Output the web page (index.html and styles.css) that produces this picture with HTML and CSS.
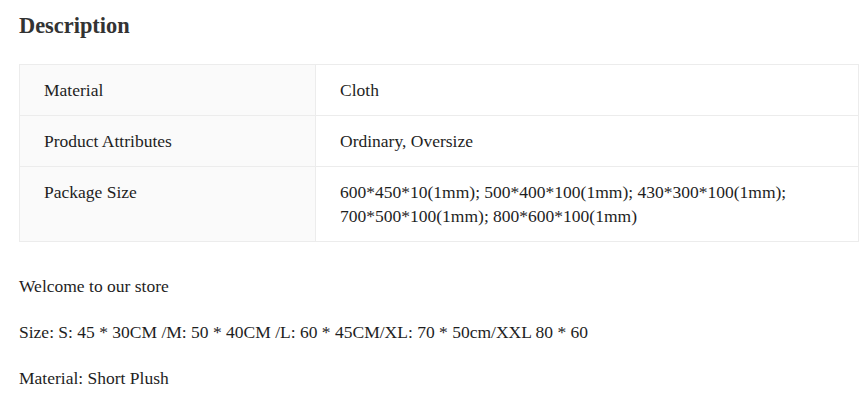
FILE: index.html
```html
<!DOCTYPE html>
<html>
<head>
<meta charset="utf-8">
<link rel="stylesheet" href="styles.css">
</head>
<body>
<div class="desc">
  <h2 class="desc-title">Description</h2>
  <table class="attrs">
    <tr><td class="attr-name">Material</td><td class="attr-value">Cloth</td></tr>
    <tr><td class="attr-name">Product Attributes</td><td class="attr-value">Ordinary, Oversize</td></tr>
    <tr><td class="attr-name">Package Size</td><td class="attr-value">600*450*10(1mm); 500*400*100(1mm); 430*300*100(1mm);<br>700*500*100(1mm); 800*600*100(1mm)</td></tr>
  </table>
  <div class="detail">
    <p>Welcome to our store</p>
    <p>Size: S: 45 * 30CM /M: 50 * 40CM /L: 60 * 45CM/XL: 70 * 50cm/XXL 80 * 60</p>
    <p>Material: Short Plush</p>
  </div>
</div>
</body>
</html>
```
FILE: styles.css
```css
html, body {
  margin: 0;
  padding: 0;
  background: #fff;
}
body {
  font-family: "Liberation Serif", "Times New Roman", serif;
  color: #1e1e1e;
  font-size: 17.5px;
}
.desc {
  padding: 0 8px 0 19px;
}
.desc-title {
  margin: 0;
  padding-top: 12px;
  font-size: 22.4px;
  line-height: 28px;
  font-weight: bold;
  color: #333;
}
.attrs {
  margin-top: 24px;
  width: 100%;
  border-collapse: collapse;
  border: 1px solid #ececec;
}
.attrs td {
  border: 1px solid #ececec;
  padding: 13px 24px 13px 24px;
  line-height: 24px;
  vertical-align: top;
}
.attr-name {
  width: 247px;
  background: #fafafa;
}
.attr-value {
  background: #fff;
  padding-left: 26px;
}
.detail {
  padding-top: 32px;
}
.detail p {
  margin: 0 0 22px;
  line-height: 24px;
}
```
